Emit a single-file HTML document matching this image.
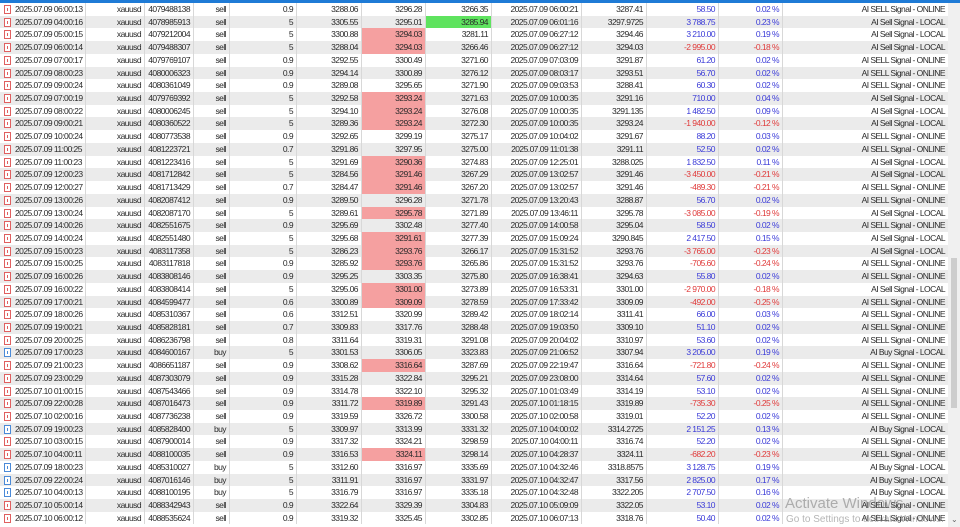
<!DOCTYPE html><html><head><meta charset="utf-8"><style>
body{margin:0;width:960px;height:527px;overflow:hidden;background:#fff;font-family:"Liberation Sans",Arial,sans-serif;font-size:8.5px;letter-spacing:-0.55px;color:#2a2a2a;position:relative}
#top{position:absolute;left:0;top:0;width:948px;height:3px;background:#1f7bd6}
#rows{position:absolute;left:0;top:3px;width:948px}
.r{position:relative;height:12.73px;line-height:12.73px}
.r:nth-child(even){background:#ebebeb}
.r span{position:absolute;top:0;height:12.73px;text-align:right;white-space:nowrap;box-sizing:border-box;padding-right:3px;border-right:1px solid #d8d8d8}
.r span:nth-child(1){left:0;width:14px;border:none}
.r span:nth-child(2){left:14px;width:72px;text-align:left;padding-left:1px}
.r span:nth-child(3){left:86px;width:59px}
.r span:nth-child(4){left:145px;width:49px}
.r span:nth-child(5){left:194px;width:36px}
.r span:nth-child(6){left:230px;width:67px}
.r span:nth-child(7){left:297px;width:65px}
.r span:nth-child(8){left:362px;width:64px}
.r span:nth-child(9){left:426px;width:66px}
.r span:nth-child(10){left:492px;width:90px}
.r span:nth-child(11){left:582px;width:65px}
.r span:nth-child(12){left:647px;width:72px;color:#3a3ad8}
.r span:nth-child(13){left:719px;width:64px;color:#3a3ad8}
.r span:nth-child(14){left:783px;width:165px;border:none}
.r span.n{color:#e03a3a}
.r span.rd{background:#f5a0a0}
.r span.gr{background:#5fe35f}
i{position:absolute;left:4px;top:2px;width:5px;height:7px;border:1px solid #e06060;background:#fff}
i:after{content:"";position:absolute;left:2px;top:2px;width:1px;height:3px;background:#e06060}
i.b{border-color:#4a8ad8}i.b:after{background:#4a8ad8}
#sb{position:absolute;left:948px;top:0;width:12px;height:527px;background:#f0f0f0}
#th{position:absolute;left:951px;top:258px;width:6px;height:150px;background:#cdcdcd}
#w1{position:absolute;left:785px;top:495px;font-size:15px;letter-spacing:0;color:rgba(120,120,120,.55)}
#w2{position:absolute;left:786px;top:514px;font-size:10px;letter-spacing:0;color:rgba(120,120,120,.55)}
</style></head><body>
<div id="top"></div>
<div id="rows">
<div class="r"><span><i></i></span><span>2025.07.09 06:00:13</span><span>xauusd</span><span>4079488138</span><span>sell</span><span>0.9</span><span>3288.06</span><span>3296.28</span><span>3266.35</span><span>2025.07.09 06:00:21</span><span>3287.41</span><span>58.50</span><span>0.02 %</span><span>AI SELL Signal - ONLINE</span></div>
<div class="r"><span><i></i></span><span>2025.07.09 04:00:16</span><span>xauusd</span><span>4078985913</span><span>sell</span><span>5</span><span>3305.55</span><span>3295.01</span><span class="gr">3285.94</span><span>2025.07.09 06:01:16</span><span>3297.9725</span><span>3 788.75</span><span>0.23 %</span><span>AI Sell Signal - LOCAL</span></div>
<div class="r"><span><i></i></span><span>2025.07.09 05:00:15</span><span>xauusd</span><span>4079212004</span><span>sell</span><span>5</span><span>3300.88</span><span class="rd">3294.03</span><span>3281.11</span><span>2025.07.09 06:27:12</span><span>3294.46</span><span>3 210.00</span><span>0.19 %</span><span>AI Sell Signal - LOCAL</span></div>
<div class="r"><span><i></i></span><span>2025.07.09 06:00:14</span><span>xauusd</span><span>4079488307</span><span>sell</span><span>5</span><span>3288.04</span><span class="rd">3294.03</span><span>3266.46</span><span>2025.07.09 06:27:12</span><span>3294.03</span><span class="n">-2 995.00</span><span class="n">-0.18 %</span><span>AI Sell Signal - LOCAL</span></div>
<div class="r"><span><i></i></span><span>2025.07.09 07:00:17</span><span>xauusd</span><span>4079769107</span><span>sell</span><span>0.9</span><span>3292.55</span><span>3300.49</span><span>3271.60</span><span>2025.07.09 07:03:09</span><span>3291.87</span><span>61.20</span><span>0.02 %</span><span>AI SELL Signal - ONLINE</span></div>
<div class="r"><span><i></i></span><span>2025.07.09 08:00:23</span><span>xauusd</span><span>4080006323</span><span>sell</span><span>0.9</span><span>3294.14</span><span>3300.89</span><span>3276.12</span><span>2025.07.09 08:03:17</span><span>3293.51</span><span>56.70</span><span>0.02 %</span><span>AI SELL Signal - ONLINE</span></div>
<div class="r"><span><i></i></span><span>2025.07.09 09:00:24</span><span>xauusd</span><span>4080361049</span><span>sell</span><span>0.9</span><span>3289.08</span><span>3295.65</span><span>3271.90</span><span>2025.07.09 09:03:53</span><span>3288.41</span><span>60.30</span><span>0.02 %</span><span>AI SELL Signal - ONLINE</span></div>
<div class="r"><span><i></i></span><span>2025.07.09 07:00:19</span><span>xauusd</span><span>4079769392</span><span>sell</span><span>5</span><span>3292.58</span><span class="rd">3293.24</span><span>3271.63</span><span>2025.07.09 10:00:35</span><span>3291.16</span><span>710.00</span><span>0.04 %</span><span>AI Sell Signal - LOCAL</span></div>
<div class="r"><span><i></i></span><span>2025.07.09 08:00:22</span><span>xauusd</span><span>4080006245</span><span>sell</span><span>5</span><span>3294.10</span><span class="rd">3293.24</span><span>3276.08</span><span>2025.07.09 10:00:35</span><span>3291.135</span><span>1 482.50</span><span>0.09 %</span><span>AI Sell Signal - LOCAL</span></div>
<div class="r"><span><i></i></span><span>2025.07.09 09:00:21</span><span>xauusd</span><span>4080360522</span><span>sell</span><span>5</span><span>3289.36</span><span class="rd">3293.24</span><span>3272.30</span><span>2025.07.09 10:00:35</span><span>3293.24</span><span class="n">-1 940.00</span><span class="n">-0.12 %</span><span>AI Sell Signal - LOCAL</span></div>
<div class="r"><span><i></i></span><span>2025.07.09 10:00:24</span><span>xauusd</span><span>4080773538</span><span>sell</span><span>0.9</span><span>3292.65</span><span>3299.19</span><span>3275.17</span><span>2025.07.09 10:04:02</span><span>3291.67</span><span>88.20</span><span>0.03 %</span><span>AI SELL Signal - ONLINE</span></div>
<div class="r"><span><i></i></span><span>2025.07.09 11:00:25</span><span>xauusd</span><span>4081223721</span><span>sell</span><span>0.7</span><span>3291.86</span><span>3297.95</span><span>3275.00</span><span>2025.07.09 11:01:38</span><span>3291.11</span><span>52.50</span><span>0.02 %</span><span>AI SELL Signal - ONLINE</span></div>
<div class="r"><span><i></i></span><span>2025.07.09 11:00:23</span><span>xauusd</span><span>4081223416</span><span>sell</span><span>5</span><span>3291.69</span><span class="rd">3290.36</span><span>3274.83</span><span>2025.07.09 12:25:01</span><span>3288.025</span><span>1 832.50</span><span>0.11 %</span><span>AI Sell Signal - LOCAL</span></div>
<div class="r"><span><i></i></span><span>2025.07.09 12:00:23</span><span>xauusd</span><span>4081712842</span><span>sell</span><span>5</span><span>3284.56</span><span class="rd">3291.46</span><span>3267.29</span><span>2025.07.09 13:02:57</span><span>3291.46</span><span class="n">-3 450.00</span><span class="n">-0.21 %</span><span>AI Sell Signal - LOCAL</span></div>
<div class="r"><span><i></i></span><span>2025.07.09 12:00:27</span><span>xauusd</span><span>4081713429</span><span>sell</span><span>0.7</span><span>3284.47</span><span class="rd">3291.46</span><span>3267.20</span><span>2025.07.09 13:02:57</span><span>3291.46</span><span class="n">-489.30</span><span class="n">-0.21 %</span><span>AI SELL Signal - ONLINE</span></div>
<div class="r"><span><i></i></span><span>2025.07.09 13:00:26</span><span>xauusd</span><span>4082087412</span><span>sell</span><span>0.9</span><span>3289.50</span><span>3296.28</span><span>3271.78</span><span>2025.07.09 13:20:43</span><span>3288.87</span><span>56.70</span><span>0.02 %</span><span>AI SELL Signal - ONLINE</span></div>
<div class="r"><span><i></i></span><span>2025.07.09 13:00:24</span><span>xauusd</span><span>4082087170</span><span>sell</span><span>5</span><span>3289.61</span><span class="rd">3295.78</span><span>3271.89</span><span>2025.07.09 13:46:11</span><span>3295.78</span><span class="n">-3 085.00</span><span class="n">-0.19 %</span><span>AI Sell Signal - LOCAL</span></div>
<div class="r"><span><i></i></span><span>2025.07.09 14:00:26</span><span>xauusd</span><span>4082551675</span><span>sell</span><span>0.9</span><span>3295.69</span><span>3302.48</span><span>3277.40</span><span>2025.07.09 14:00:58</span><span>3295.04</span><span>58.50</span><span>0.02 %</span><span>AI SELL Signal - ONLINE</span></div>
<div class="r"><span><i></i></span><span>2025.07.09 14:00:24</span><span>xauusd</span><span>4082551480</span><span>sell</span><span>5</span><span>3295.68</span><span class="rd">3291.61</span><span>3277.39</span><span>2025.07.09 15:09:24</span><span>3290.845</span><span>2 417.50</span><span>0.15 %</span><span>AI Sell Signal - LOCAL</span></div>
<div class="r"><span><i></i></span><span>2025.07.09 15:00:23</span><span>xauusd</span><span>4083117358</span><span>sell</span><span>5</span><span>3286.23</span><span class="rd">3293.76</span><span>3266.17</span><span>2025.07.09 15:31:52</span><span>3293.76</span><span class="n">-3 765.00</span><span class="n">-0.23 %</span><span>AI Sell Signal - LOCAL</span></div>
<div class="r"><span><i></i></span><span>2025.07.09 15:00:25</span><span>xauusd</span><span>4083117818</span><span>sell</span><span>0.9</span><span>3285.92</span><span class="rd">3293.76</span><span>3265.86</span><span>2025.07.09 15:31:52</span><span>3293.76</span><span class="n">-705.60</span><span class="n">-0.24 %</span><span>AI SELL Signal - ONLINE</span></div>
<div class="r"><span><i></i></span><span>2025.07.09 16:00:26</span><span>xauusd</span><span>4083808146</span><span>sell</span><span>0.9</span><span>3295.25</span><span>3303.35</span><span>3275.80</span><span>2025.07.09 16:38:41</span><span>3294.63</span><span>55.80</span><span>0.02 %</span><span>AI SELL Signal - ONLINE</span></div>
<div class="r"><span><i></i></span><span>2025.07.09 16:00:22</span><span>xauusd</span><span>4083808414</span><span>sell</span><span>5</span><span>3295.06</span><span class="rd">3301.00</span><span>3273.89</span><span>2025.07.09 16:53:31</span><span>3301.00</span><span class="n">-2 970.00</span><span class="n">-0.18 %</span><span>AI Sell Signal - LOCAL</span></div>
<div class="r"><span><i></i></span><span>2025.07.09 17:00:21</span><span>xauusd</span><span>4084599477</span><span>sell</span><span>0.6</span><span>3300.89</span><span class="rd">3309.09</span><span>3278.59</span><span>2025.07.09 17:33:42</span><span>3309.09</span><span class="n">-492.00</span><span class="n">-0.25 %</span><span>AI SELL Signal - ONLINE</span></div>
<div class="r"><span><i></i></span><span>2025.07.09 18:00:26</span><span>xauusd</span><span>4085310367</span><span>sell</span><span>0.6</span><span>3312.51</span><span>3320.99</span><span>3289.42</span><span>2025.07.09 18:02:14</span><span>3311.41</span><span>66.00</span><span>0.03 %</span><span>AI SELL Signal - ONLINE</span></div>
<div class="r"><span><i></i></span><span>2025.07.09 19:00:21</span><span>xauusd</span><span>4085828181</span><span>sell</span><span>0.7</span><span>3309.83</span><span>3317.76</span><span>3288.48</span><span>2025.07.09 19:03:50</span><span>3309.10</span><span>51.10</span><span>0.02 %</span><span>AI SELL Signal - ONLINE</span></div>
<div class="r"><span><i></i></span><span>2025.07.09 20:00:25</span><span>xauusd</span><span>4086236798</span><span>sell</span><span>0.8</span><span>3311.64</span><span>3319.31</span><span>3291.08</span><span>2025.07.09 20:04:02</span><span>3310.97</span><span>53.60</span><span>0.02 %</span><span>AI SELL Signal - ONLINE</span></div>
<div class="r"><span><i class="b"></i></span><span>2025.07.09 17:00:23</span><span>xauusd</span><span>4084600167</span><span>buy</span><span>5</span><span>3301.53</span><span>3306.05</span><span>3323.83</span><span>2025.07.09 21:06:52</span><span>3307.94</span><span>3 205.00</span><span>0.19 %</span><span>AI Buy Signal - LOCAL</span></div>
<div class="r"><span><i></i></span><span>2025.07.09 21:00:23</span><span>xauusd</span><span>4086651187</span><span>sell</span><span>0.9</span><span>3308.62</span><span class="rd">3316.64</span><span>3287.69</span><span>2025.07.09 22:19:47</span><span>3316.64</span><span class="n">-721.80</span><span class="n">-0.24 %</span><span>AI SELL Signal - ONLINE</span></div>
<div class="r"><span><i></i></span><span>2025.07.09 23:00:29</span><span>xauusd</span><span>4087303079</span><span>sell</span><span>0.9</span><span>3315.28</span><span>3322.84</span><span>3295.21</span><span>2025.07.09 23:08:00</span><span>3314.64</span><span>57.60</span><span>0.02 %</span><span>AI SELL Signal - ONLINE</span></div>
<div class="r"><span><i></i></span><span>2025.07.10 01:00:15</span><span>xauusd</span><span>4087543466</span><span>sell</span><span>0.9</span><span>3314.78</span><span>3322.10</span><span>3295.32</span><span>2025.07.10 01:03:49</span><span>3314.19</span><span>53.10</span><span>0.02 %</span><span>AI SELL Signal - ONLINE</span></div>
<div class="r"><span><i></i></span><span>2025.07.09 22:00:28</span><span>xauusd</span><span>4087016473</span><span>sell</span><span>0.9</span><span>3311.72</span><span class="rd">3319.89</span><span>3291.43</span><span>2025.07.10 01:18:15</span><span>3319.89</span><span class="n">-735.30</span><span class="n">-0.25 %</span><span>AI SELL Signal - ONLINE</span></div>
<div class="r"><span><i></i></span><span>2025.07.10 02:00:16</span><span>xauusd</span><span>4087736238</span><span>sell</span><span>0.9</span><span>3319.59</span><span>3326.72</span><span>3300.58</span><span>2025.07.10 02:00:58</span><span>3319.01</span><span>52.20</span><span>0.02 %</span><span>AI SELL Signal - ONLINE</span></div>
<div class="r"><span><i class="b"></i></span><span>2025.07.09 19:00:23</span><span>xauusd</span><span>4085828400</span><span>buy</span><span>5</span><span>3309.97</span><span>3313.99</span><span>3331.32</span><span>2025.07.10 04:00:02</span><span>3314.2725</span><span>2 151.25</span><span>0.13 %</span><span>AI Buy Signal - LOCAL</span></div>
<div class="r"><span><i></i></span><span>2025.07.10 03:00:15</span><span>xauusd</span><span>4087900014</span><span>sell</span><span>0.9</span><span>3317.32</span><span>3324.21</span><span>3298.59</span><span>2025.07.10 04:00:11</span><span>3316.74</span><span>52.20</span><span>0.02 %</span><span>AI SELL Signal - ONLINE</span></div>
<div class="r"><span><i></i></span><span>2025.07.10 04:00:11</span><span>xauusd</span><span>4088100035</span><span>sell</span><span>0.9</span><span>3316.53</span><span class="rd">3324.11</span><span>3298.14</span><span>2025.07.10 04:28:37</span><span>3324.11</span><span class="n">-682.20</span><span class="n">-0.23 %</span><span>AI SELL Signal - ONLINE</span></div>
<div class="r"><span><i class="b"></i></span><span>2025.07.09 18:00:23</span><span>xauusd</span><span>4085310027</span><span>buy</span><span>5</span><span>3312.60</span><span>3316.97</span><span>3335.69</span><span>2025.07.10 04:32:46</span><span>3318.8575</span><span>3 128.75</span><span>0.19 %</span><span>AI Buy Signal - LOCAL</span></div>
<div class="r"><span><i class="b"></i></span><span>2025.07.09 22:00:24</span><span>xauusd</span><span>4087016146</span><span>buy</span><span>5</span><span>3311.91</span><span>3316.97</span><span>3331.97</span><span>2025.07.10 04:32:47</span><span>3317.56</span><span>2 825.00</span><span>0.17 %</span><span>AI Buy Signal - LOCAL</span></div>
<div class="r"><span><i class="b"></i></span><span>2025.07.10 04:00:13</span><span>xauusd</span><span>4088100195</span><span>buy</span><span>5</span><span>3316.79</span><span>3316.97</span><span>3335.18</span><span>2025.07.10 04:32:48</span><span>3322.205</span><span>2 707.50</span><span>0.16 %</span><span>AI Buy Signal - LOCAL</span></div>
<div class="r"><span><i></i></span><span>2025.07.10 05:00:14</span><span>xauusd</span><span>4088342943</span><span>sell</span><span>0.9</span><span>3322.64</span><span>3329.39</span><span>3304.83</span><span>2025.07.10 05:09:09</span><span>3322.05</span><span>53.10</span><span>0.02 %</span><span>AI SELL Signal - ONLINE</span></div>
<div class="r"><span><i></i></span><span>2025.07.10 06:00:12</span><span>xauusd</span><span>4088535624</span><span>sell</span><span>0.9</span><span>3319.32</span><span>3325.45</span><span>3302.85</span><span>2025.07.10 06:07:13</span><span>3318.76</span><span>50.40</span><span>0.02 %</span><span>AI SELL Signal - ONLINE</span></div>
</div>
<div id="sb"><div style="position:absolute;left:0;top:0;width:12px;height:3px;background:#1f7bd6"></div></div>
<div id="th"></div>
<div style="position:absolute;left:951px;top:515px;font-size:8px;color:#666">&#8964;</div>
<div id="w1">Activate Windows</div>
<div id="w2">Go to Settings to activate Windows.</div>
</body></html>
